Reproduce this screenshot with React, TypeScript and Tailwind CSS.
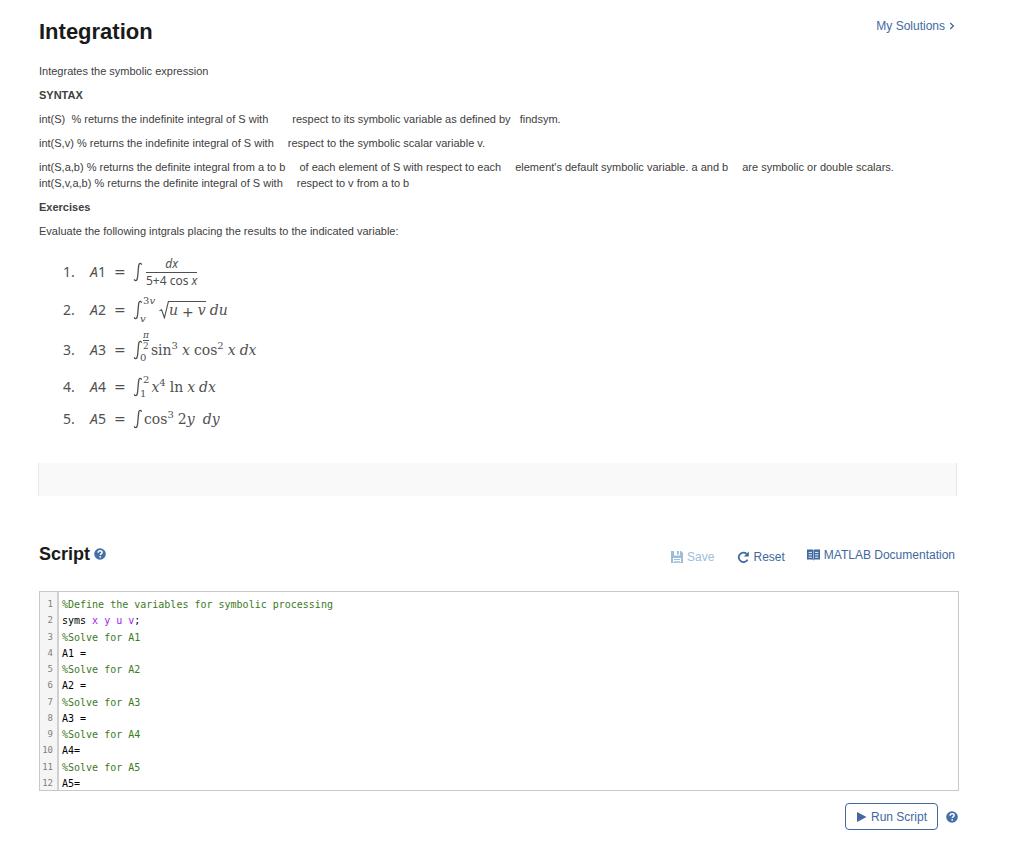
import { useState } from 'react';
import type { ReactNode } from 'react';

const INITIAL_CODE = `%Define the variables for symbolic processing
syms x y u v;
%Solve for A1
A1 =
%Solve for A2
A2 =
%Solve for A3
A3 =
%Solve for A4
A4=
%Solve for A5
A5=`;

function HelpIcon() {
  return (
    <svg viewBox="0 0 12 12" className="h-3 w-3" aria-hidden="true">
      <circle cx="6" cy="6" r="5.8" fill="#4470a8" />
      <path d="M4.1 4.7C4.1 3.4 5 2.8 6.1 2.8c1.2 0 2 .7 2 1.7 0 1.3-1.8 1.3-1.8 2.5" fill="none" stroke="#fff" strokeWidth="1.5" />
      <circle cx="6.2" cy="8.8" r=".9" fill="#fff" />
    </svg>
  );
}

function SaveIcon() {
  return (
    <svg viewBox="0 0 12 12" className="h-3 w-3" aria-hidden="true">
      <path d="M0 0h10l2 2v10H0z" fill="currentColor" />
      <path d="M3 0h6v4.4H3zM2 7h8v4.2H2z" fill="#fff" />
      <path d="M6 0h2v3.4H6zM3 8h6v1H3zM3 10h6v.8H3z" fill="currentColor" />
    </svg>
  );
}

function ResetIcon() {
  return (
    <svg viewBox="0 0 12 12" className="h-3 w-3" aria-hidden="true">
      <path d="M9.6 2.8A4.7 4.7 0 1 0 10.6 8.6" fill="none" stroke="currentColor" strokeWidth="1.8" />
      <path d="M11.8.4v5H6.8z" fill="currentColor" />
    </svg>
  );
}

function BookIcon() {
  return (
    <svg viewBox="0 0 13 12" className="h-3 w-[13px]" aria-hidden="true">
      <path d="M0 .6h5.6l.9.6.9-.6H13v10H7.4l-.9.9-.9-.9H0z" fill="currentColor" />
      <path d="M6.5 1.6v9" stroke="#fff" strokeWidth=".5" />
      <path d="M1.6 3.4H5M1.6 5.8H5M1.6 8.2H5M8 3.4h3.4M8 5.8h3.4M8 8.2h3.4" stroke="#fff" strokeWidth=".9" />
    </svg>
  );
}

function IntegralSign({ className = '' }: { className?: string }) {
  return (
    <svg viewBox="0 0 9 20" className={`h-5 w-[9px] shrink-0 ${className}`} aria-hidden="true">
      <path
        d="M8.4 2.2C7.8.9 6.2 1 5.8 3 5.2 6 5 14 4.2 17 3.7 19 2 19.1 1.4 17.8"
        fill="none"
        stroke="currentColor"
        strokeWidth="1.3"
        strokeLinecap="round"
      />
    </svg>
  );
}

function Limits({ upper, lower }: { upper: ReactNode; lower: ReactNode }) {
  return (
    <span className="flex flex-col items-start justify-between self-stretch text-[10px] leading-3">
      <span className="ml-px">{upper}</span>
      <span className="-ml-0.5">{lower}</span>
    </span>
  );
}

function Power({ children }: { children: ReactNode }) {
  return <sup className="top-0 self-start text-[10px] leading-3">{children}</sup>;
}

function Operator({ children }: { children: ReactNode }) {
  return <span className="font-['DejaVu_Sans',sans-serif] text-sm">{children}</span>;
}

function Exercise({ n, className, children }: { n: number; className: string; children: ReactNode }) {
  return (
    <li className={`flex items-center ${className}`}>
      <span className="w-[27px] font-['Noto_Sans',sans-serif] text-sm">{n}.</span>
      <span className="flex w-[43px] items-baseline gap-2 font-['Noto_Sans',sans-serif] text-sm">
        <span>
          <i>A</i>
          {n}
        </span>
        <Operator>=</Operator>
      </span>
      {children}
    </li>
  );
}

function Exercises() {
  return (
    <ol className="ml-6 mt-3 font-['DejaVu_Serif',serif] text-sm text-[#505050]">
      <Exercise n={1} className="h-[42px]">
        <IntegralSign />
        <span className="ml-1 flex flex-col text-center font-['Noto_Sans',sans-serif] text-xs leading-4">
          <i className="border-b border-[#505050]">dx</i>
          <span>
            5+4 cos <i>x</i>
          </span>
        </span>
      </Exercise>
      <Exercise n={2} className="h-[34px]">
        <span className="flex h-[30px] items-center">
          <IntegralSign />
          <Limits upper={<>3<i>v</i></>} lower={<i>v</i>} />
        </span>
        <svg viewBox="0 0 10 18" className="ml-1 h-[18px] w-2.5" aria-hidden="true">
          <path d="M.5 9.8 2.6 8.8 5.4 16.8 9.4.5H10" fill="none" stroke="currentColor" strokeWidth="1.1" />
        </svg>
        <span className="flex h-[18px] gap-1 border-t border-[#505050] leading-4">
          <i>u</i>
          <Operator>+</Operator>
          <i>v</i>
        </span>
        <i className="ml-1">du</i>
      </Exercise>
      <Exercise n={3} className="h-[46px]">
        <span className="mb-1.5 flex h-[34px] items-center">
          <IntegralSign className="mt-1.5" />
          <Limits
            upper={
              <span className="flex flex-col text-center text-[9px] leading-[10px]">
                <i className="border-b border-[#505050]">π</i>
                <span>2</span>
              </span>
            }
            lower="0"
          />
        </span>
        <span className="ml-0.5 flex">
          sin<Power>3</Power>
          <i className="mx-1">x</i>cos<Power>2</Power>
          <i className="mx-1">x</i>
          <i>dx</i>
        </span>
      </Exercise>
      <Exercise n={4} className="h-7">
        <span className="flex h-[26px] items-center">
          <IntegralSign />
          <Limits upper="2" lower="1" />
        </span>
        <span className="ml-0.5 flex">
          <i>x</i>
          <Power>4</Power>
          <span className="ml-1">ln</span>
          <i className="mx-1">x</i>
          <i>dx</i>
        </span>
      </Exercise>
      <Exercise n={5} className="h-9">
        <IntegralSign />
        <span className="ml-0.5 flex">
          cos<Power>3</Power>
          <span className="ml-1">
            2<i>y</i>
          </span>
          <i className="ml-2">dy</i>
        </span>
      </Exercise>
    </ol>
  );
}

function CodeLine({ text }: { text: string }) {
  if (text.startsWith('%')) return <span className="text-[#3c7a1e]">{text}</span>;
  if (text.startsWith('syms ')) {
    return (
      <>
        syms <span className="text-[#a020f0]">{text.slice(5).replace(';', '')}</span>
        {text.endsWith(';') && ';'}
      </>
    );
  }
  return <>{text}</>;
}

function CodeEditor() {
  const [code, setCode] = useState(INITIAL_CODE);
  const lines = code.split('\n');

  return (
    <div className="flex h-[200px] overflow-hidden border border-[#c8c8c8] font-['DejaVu_Sans_Mono',monospace] text-[10px] leading-relaxed">
      <div className="w-[19px] shrink-0 border-r-2 border-[#d0d0d0] bg-[#f5f5f5] pr-1 pt-[5px] text-[#808080]" aria-hidden="true">
        {lines.map((_, i) => (
          <div key={i} className="flex h-[1lh] justify-end">
            <span className="text-[9px]">{i + 1}</span>
          </div>
        ))}
      </div>
      <div className="relative grow">
        <pre className="px-[3px] pt-[5px] font-[inherit] text-black" aria-hidden="true">
          {lines.map((line, i) => (
            <div key={i} className="min-h-[1lh]">
              <CodeLine text={line} />
            </div>
          ))}
        </pre>
        <textarea
          aria-label="Script"
          spellCheck={false}
          value={code}
          onChange={(e) => setCode(e.target.value)}
          className="absolute inset-0 h-full w-full resize-none overflow-hidden px-[3px] pt-[5px] text-transparent caret-black outline-none"
        />
      </div>
    </div>
  );
}

export default function App() {
  return (
    <main className="bg-white pb-3 pl-[39px] pr-14 pt-4 font-['Liberation_Sans',Arial,sans-serif] text-[11px] leading-4 text-[#404040]">
      <header className="flex items-start justify-between">
        <h1 className="text-[22px] font-bold leading-8 text-[#1a1a1a]">Integration</h1>
        <a href="#solutions" className="mr-1 flex items-center gap-1 pt-0.5 text-xs text-[#41699f]">
          My Solutions
          <svg viewBox="0 0 6 8" className="h-2 w-1.5" aria-hidden="true">
            <path d="M1.2 1 4.4 4 1.2 7" fill="none" stroke="currentColor" strokeWidth="1.3" />
          </svg>
        </a>
      </header>

      <section className="mt-[15px] flex flex-col gap-2">
        <p>Integrates the symbolic expression</p>
        <h2 className="font-bold">SYNTAX</h2>
        <p className="flex flex-wrap gap-x-6">
          <span className="whitespace-pre">int(S)  % returns the indefinite integral of S with</span>
          <span className="whitespace-pre">respect to its symbolic variable as defined by   findsym.</span>
        </p>
        <p className="flex flex-wrap gap-x-3.5">
          <span>int(S,v) % returns the indefinite integral of S with</span>
          <span>respect to the symbolic scalar variable v.</span>
        </p>
        <div>
          <p className="flex flex-wrap gap-x-3.5">
            <span>int(S,a,b) % returns the definite integral from a to b</span>
            <span>of each element of S with respect to each</span>
            <span>element's default symbolic variable. a and b</span>
            <span>are symbolic or double scalars.</span>
          </p>
          <p className="flex flex-wrap gap-x-3.5">
            <span>int(S,v,a,b) % returns the definite integral of S with</span>
            <span>respect to v from a to b</span>
          </p>
        </div>
        <h2 className="font-bold">Exercises</h2>
        <p>Evaluate the following intgrals placing the results to the indicated variable:</p>
      </section>

      <Exercises />

      <div className="-ml-px mr-0.5 mt-[26px] h-[33px] border-x border-[#e8e8e8] bg-[#f9f9f9]" />

      <div className="mt-[46px] flex items-start justify-between">
        <div className="flex items-center gap-1">
          <h2 className="text-lg font-bold leading-6 text-[#1a1a1a]">Script</h2>
          <button type="button" aria-label="Script help">
            <HelpIcon />
          </button>
        </div>
        <div className="mr-1 mt-[5px] flex items-start text-xs text-[#41699f]">
          <button type="button" disabled className="mt-0.5 flex items-center gap-1 text-[#9dbdd8]">
            <SaveIcon />
            Save
          </button>
          <button type="button" className="ml-[23px] mt-0.5 flex items-center gap-1">
            <ResetIcon />
            Reset
          </button>
          <a href="#documentation" className="ml-[22px] flex items-center gap-1">
            <BookIcon />
            MATLAB Documentation
          </a>
        </div>
      </div>

      <div className="mt-[25px]">
        <CodeEditor />
      </div>

      <div className="mr-px mt-3 flex items-center justify-end gap-2">
        <button type="button" className="flex h-[27px] items-center gap-1 rounded-sm border border-[#41699f] px-2.5 text-xs text-[#41699f]">
          <svg viewBox="0 0 11 10" className="h-2.5 w-[11px]" aria-hidden="true">
            <path d="M1 0 10.5 5 1 10z" fill="currentColor" />
          </svg>
          Run Script
        </button>
        <button type="button" aria-label="Run help">
          <HelpIcon />
        </button>
      </div>
    </main>
  );
}
